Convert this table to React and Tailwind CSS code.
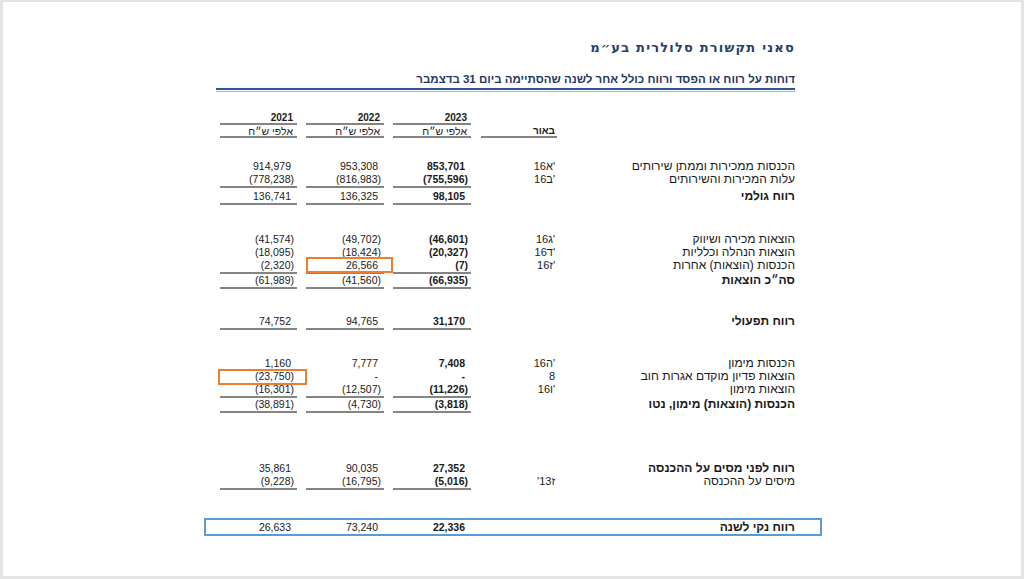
import React from "react";

const F = { fontFamily: '"Liberation Sans", Arial, sans-serif' };

function Cell({ v, bold, line, box, w, ml }) {
  const neg = v && v.startsWith("(");
  return (
    <div
      className={`relative ${w} ${ml} text-right text-[10.5px] leading-[13px] text-[#1a1a1a] ${
        bold ? "font-bold" : ""
      } ${line ? "border-b-2 border-[#858585]" : ""} ${neg ? "pr-[3px]" : "pr-[6px]"}`}
    >
      {v}
      {box}
    </div>
  );
}

function Note({ parts }) {
  return (
    <div className="ml-[10px] w-[76px] flex flex-row justify-end pr-[2px] text-[11px] leading-[13px] text-[#1a1a1a]">
      {(parts || []).map((p, i) => (
        <span key={i} className="whitespace-pre">
          {p}
        </span>
      ))}
    </div>
  );
}

function Row({ vals, note, label, labelBold, line, mt, boxes = {} }) {
  return (
    <div className={`flex items-start pl-[16px] pr-[27px] ${mt || ""}`}>
      <Cell v={vals[0]} line={line} w="w-[77px]" ml="" box={boxes[0]} />
      <Cell v={vals[1]} line={line} w="w-[78px]" ml="ml-[9px]" box={boxes[1]} />
      <Cell v={vals[2]} line={line} bold w="w-[78px]" ml="ml-[9px]" box={boxes[2]} />
      <Note parts={note} />
      <div
        dir="rtl"
        className={`flex-1 text-right text-[12px] leading-[13px] text-[#1a1a1a] whitespace-nowrap ${
          labelBold ? "font-bold" : ""
        }`}
      >
        {label}
      </div>
    </div>
  );
}

const OrangeA = (
  <div className="absolute left-0 -top-[2px] w-[87px] h-[16px] border-2 border-[#ed7d31]" />
);
const OrangeB = (
  <div className="absolute -left-[2px] -top-[1px] w-[89px] h-[16px] border-2 border-[#ed7d31]" />
);

export default function App() {
  return (
    <div style={F} className="w-[1024px] h-[579px] bg-[#e4e4e4] pt-[2px] pl-[3px] pr-[3px] pb-[3px]">
      <div className="w-full h-full bg-white overflow-hidden">
        <div className="ml-[201px] w-[618px] flex flex-col">
          <div
            dir="rtl"
            className="mt-[38px] pr-[27px] text-right text-[13px] leading-[16px] font-bold tracking-[1.2px] text-[#25406b]"
            style={{ fontFamily: '"DejaVu Sans", "Liberation Sans", sans-serif' }}
          >
            סאני תקשורת סלולרית בע״מ
          </div>
          <div
            dir="rtl"
            className="mt-[16px] pr-[27px] text-right text-[11.5px] leading-[14px] font-bold text-[#1f3864]"
          >
            דוחות על רווח או הפסד ורווח כולל אחר לשנה שהסתיימה ביום 31 בדצמבר
          </div>
          <div className="ml-[12px] mr-[27px] mt-[2px] border-b-2 border-[#2f5597]" />
          <div className="ml-[12px] mr-[27px] mt-[1px] border-b border-[#9db3d9]" />

          {/* years */}
          <div className="flex items-start pl-[16px] pr-[27px] mt-[19px]">
            {["2021", "2022", "2023"].map((y, i) => (
              <div
                key={y}
                className={`${i === 0 ? "w-[77px]" : "w-[78px] ml-[9px]"} h-[14px] text-right pr-[4px] text-[10px] leading-[14px] font-bold text-[#1a1a1a] border-b-2 border-[#858585]`}
              >
                {y}
              </div>
            ))}
          </div>
          {/* units */}
          <div className="flex items-start pl-[16px] pr-[27px]">
            {[0, 1, 2].map((i) => (
              <div
                key={i}
                dir="rtl"
                className={`${i === 0 ? "w-[77px]" : "w-[78px] ml-[9px]"} h-[13px] text-right pr-[4px] text-[10.5px] leading-[12px] text-[#1a1a1a] border-b-2 border-[#858585]`}
              >
                אלפי ש״ח
              </div>
            ))}
            <div
              dir="rtl"
              className="ml-[10px] w-[76px] h-[13px] text-right pr-[2px] text-[10px] leading-[12px] font-bold text-[#1a1a1a] border-b-2 border-[#858585]"
            >
              באור
            </div>
            <div className="flex-1" />
          </div>

          <Row mt="mt-[22px]" vals={["914,979", "953,308", "853,701"]} note={["16", "א", "'"]} label="הכנסות ממכירות וממתן שירותים" />
          <Row line vals={["(778,238)", "(816,983)", "(755,596)"]} note={["16", "ב", "'"]} label="עלות המכירות והשירותים" />
          <Row mt="mt-[2px]" line vals={["136,741", "136,325", "98,105"]} label="רווח גולמי" labelBold />

          <Row mt="mt-[28px]" vals={["(41,574)", "(49,702)", "(46,601)"]} note={["16", "ג", "'"]} label="הוצאות מכירה ושיווק" />
          <Row vals={["(18,095)", "(18,424)", "(20,327)"]} note={["16", "ד", "'"]} label="הוצאות הנהלה וכלליות" />
          <Row line vals={["(2,320)", "26,566", "(7)"]} note={["16", "ז", "'"]} label="הכנסות (הוצאות) אחרות" boxes={{ 1: OrangeA }} />
          <Row line vals={["(61,989)", "(41,560)", "(66,935)"]} label="סה״כ הוצאות" labelBold />

          <Row mt="mt-[26px]" line vals={["74,752", "94,765", "31,170"]} label="רווח תפעולי" labelBold />

          <Row mt="mt-[27px]" vals={["1,160", "7,777", "7,408"]} note={["16", "ה", "'"]} label="הכנסות מימון" />
          <Row vals={["(23,750)", "-", "-"]} note={["8"]} label="הוצאות פדיון מוקדם אגרות חוב" boxes={{ 0: OrangeB }} />
          <Row line vals={["(16,301)", "(12,507)", "(11,226)"]} note={["16", "ו", "'"]} label="הוצאות מימון" />
          <Row line vals={["(38,891)", "(4,730)", "(3,818)"]} label="הכנסות (הוצאות) מימון, נטו" labelBold />

          <Row mt="mt-[49px]" vals={["35,861", "90,035", "27,352"]} label="רווח לפני מסים על ההכנסה" labelBold />
          <Row line vals={["(9,228)", "(16,795)", "(5,016)"]} note={["'", "13", "ז"]} label="מיסים על ההכנסה" />

          <div className="mt-[28px] h-[18px] border-2 border-[#5b9bd5] flex flex-col justify-center">
            <div className="-ml-[2px] -mr-[2px]">
              <Row vals={["26,633", "73,240", "22,336"]} label="רווח נקי לשנה" labelBold />
            </div>
          </div>
        </div>
      </div>
    </div>
  );
}
